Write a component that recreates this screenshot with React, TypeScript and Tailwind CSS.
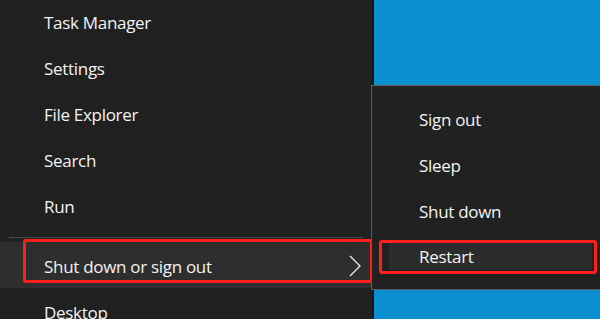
const items = ['Task Manager', 'Settings', 'File Explorer', 'Search', 'Run'];
const subItems = ['Sign out', 'Sleep', 'Shut down'];

export default function App() {
  return (
    <div className="relative flex h-[319px] w-[600px] overflow-hidden bg-[#0b8fd1] font-['Open_Sans',sans-serif] text-[17px] tracking-[-0.3px] text-[#f3f3f3]">
      {/* main Win+X menu */}
      <div className="flex w-[374px] shrink-0 flex-col border-r-2 border-[#151515] bg-[#202020]">
        {items.map((label) => (
          <div key={label} className="flex h-[46px] shrink-0 items-center pl-[44px]">
            {label}
          </div>
        ))}
        <div className="mx-[9px] mt-[7px] h-px shrink-0 bg-[#4a4a4a]" />
        <div className="relative mt-[4px] flex h-[46px] shrink-0 items-center justify-between bg-[#2e2e2e] pl-[44px] pr-[11px]">
          <span className="pt-[3px]">Shut down or sign out</span>
          <svg width="12" height="22" viewBox="0 0 12 22" className="mt-[2px] text-[#ededed]">
            <polyline points="1,1 11,11 1,21" fill="none" stroke="currentColor" strokeWidth="1.3" />
          </svg>
          <div className="absolute left-[23px] top-[-3px] h-[44px] w-[350px] rounded-[3px] border-[3px] border-[#ff1f1f]" />
        </div>
        <div className="flex h-[46px] shrink-0 items-center pl-[44px] pt-[4px]">Desktop</div>
      </div>

      {/* submenu */}
      <div className="absolute left-[371px] top-[85px] flex h-[205px] w-[240px] flex-col border border-[#5e5e5e] bg-[#212121] pt-[11px]">
        {subItems.map((label) => (
          <div key={label} className="flex h-[46px] shrink-0 items-center pl-[47px]">
            {label}
          </div>
        ))}
        <div className="relative mt-[8px] flex h-[27px] shrink-0 items-center">
          <div className="ml-[17px] flex h-full w-[203px] items-center bg-[#2c2c2c] pl-[30px] pt-[1px]">Restart</div>
          <div className="absolute left-[7px] top-[-3px] h-[34px] w-[218px] rounded-[3px] border-[3px] border-[#ff1f1f]" />
        </div>
      </div>
    </div>
  );
}
